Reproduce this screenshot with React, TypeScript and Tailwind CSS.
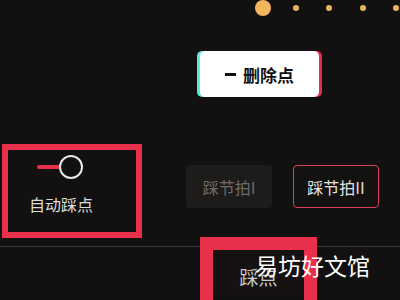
import React from 'react';

const font = { fontFamily: '"Noto Sans CJK SC", "Noto Sans", sans-serif' };

function BeatDots() {
    // top timeline markers
    return (
        <div className="flex h-[16px] items-center">
            <div className="ml-[255px] h-[16px] w-[16px] rounded-full bg-[#f2b65c]"></div>
            <div className="ml-[22px] h-[6px] w-[6px] rounded-full bg-[#e8b463]"></div>
            <div className="ml-[27px] h-[6px] w-[6px] rounded-full bg-[#e8b463]"></div>
            <div className="ml-[28px] h-[6px] w-[6px] rounded-full bg-[#e8b463]"></div>
            <div className="ml-[27px] h-[6px] w-[6px] rounded-full bg-[#e8b463]"></div>
        </div>
    );
}

export default function App() {
    return (
        <div className="relative h-[300px] w-[400px] overflow-hidden bg-[#121010]" style={font}>
            <BeatDots />

            {/* delete point button */}
            <div className="ml-[200px] mt-[35px] flex h-[46px] w-[119px] items-center justify-center gap-[7px] rounded-[5px] bg-white shadow-[-3px_0_0_#5fe8e2,3px_0_0_#e0304a]">
                <div className="h-[3px] w-[11px] bg-[#111]"></div>
                <span className="text-[17px] font-bold leading-none text-[#111]">删除点</span>
            </div>

            <div className="mt-[47px] flex items-start">
                {/* auto beat toggle */}
                <div className="ml-[2px] flex h-[94px] w-[140px] flex-col border-[6px] border-[#e8304a] bg-[#121010]">
                    <div className="ml-[29px] mt-[5px] flex items-center">
                        <div className="h-[4px] w-[22px] rounded-l-full bg-[#e8304a]"></div>
                        <div className="h-[24px] w-[24px] rounded-full border-2 border-[#e8e8e8]"></div>
                    </div>
                    <span className="ml-[21px] mt-[17px] text-[16px] leading-none text-[#dcdcdc]">自动踩点</span>
                </div>

                <div className="ml-[44px] mt-[21px] flex h-[43px] w-[86px] items-center justify-center rounded-[4px] bg-[#1e1b1b] text-[16px] text-[#6f6b6b]">
                    踩节拍I
                </div>
                <div className="ml-[21px] mt-[21px] flex h-[43px] w-[86px] items-center justify-center rounded-[4px] border-[1.5px] border-[#d8415a] bg-[#141111] text-[16px] text-[#e2e2e2]">
                    踩节拍II
                </div>
            </div>

            <div className="mt-[8px] h-px w-full bg-[#3a3838]"></div>

            {/* bottom tab highlight */}
            <div className="ml-[200px] mt-[-10px] h-[70px] w-[117px] border-x-[13px] border-t-[13px] border-[#e8304a]">
                <div className="flex h-[45px] items-center justify-center bg-[#161212] pt-[10px] text-[19px] text-[#c9c9c9]">
                    踩点
                </div>
            </div>

            <div className="absolute left-[255px] top-[254px] text-[23px] leading-none text-white">易坊好文馆</div>
        </div>
    );
}
